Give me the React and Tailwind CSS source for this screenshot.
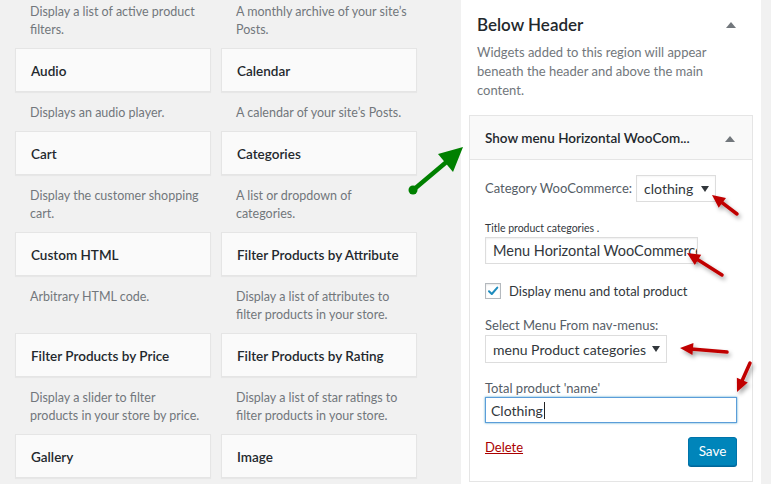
import React from "react";

const widgets = [
  ["Active Product Filters", ["Display a list of active product", "filters."]],
  ["Archives", ["A monthly archive of your site’s", "Posts."]],
  ["Audio", ["Displays an audio player."]],
  ["Calendar", ["A calendar of your site’s Posts."]],
  ["Cart", ["Display the customer shopping", "cart."]],
  ["Categories", ["A list or dropdown of", "categories."]],
  ["Custom HTML", ["Arbitrary HTML code."]],
  ["Filter Products by Attribute", ["Display a list of attributes to", "filter products in your store."]],
  ["Filter Products by Price", ["Display a slider to filter", "products in your store by price."]],
  ["Filter Products by Rating", ["Display a list of star ratings to", "filter products in your store."]],
  ["Gallery", []],
  ["Image", []],
];

function Up() {
  return (
    <svg width="10" height="6" viewBox="0 0 10 6">
      <polygon points="5,0 10,6 0,6" fill="#72777c" />
    </svg>
  );
}

function Down() {
  return (
    <svg width="8" height="6" viewBox="0 0 8 6">
      <polygon points="0,0 8,0 4,6" fill="#32373c" />
    </svg>
  );
}

function RedArrow({ x1, y1, x2, y2 }) {
  const dx = x2 - x1;
  const dy = y2 - y1;
  const len = Math.sqrt(dx * dx + dy * dy);
  const ux = dx / len;
  const uy = dy / len;
  const hl = 13;
  const hw = 6;
  const bx = x2 - ux * hl;
  const by = y2 - uy * hl;
  const px = -uy;
  const py = ux;
  const pts = `${x2},${y2} ${bx + px * hw},${by + py * hw} ${bx - px * hw},${by - py * hw}`;
  return (
    <g filter="url(#sh)">
      <line x1={x1} y1={y1} x2={bx + ux * 2} y2={by + uy * 2} stroke="#c00000" strokeWidth="3.5" strokeLinecap="round" />
      <polygon points={pts} fill="#c00000" />
    </g>
  );
}

export default function App() {
  return (
    <div
      className="relative w-[771px] h-[484px] overflow-hidden bg-[#f1f1f1] flex"
      style={{ fontFamily: 'Lato, "Open Sans", sans-serif' }}
    >
      <div className="pl-[15px] w-[417px] shrink-0 mt-[-53px]">
        <div className="grid grid-cols-[196px_196px] gap-x-[10px]">
          {widgets.map(([t, d]) => (
            <div key={t} className="flex flex-col">
              <div className="h-[44px] bg-[#fafafa] border border-[#e5e5e5] shadow-[0_1px_1px_rgba(0,0,0,0.04)] flex items-center pt-[2px] px-[15px] text-[13.5px] font-semibold text-[#23282d] whitespace-nowrap">
                {t}
              </div>
              <div className="pt-[12px] pb-[9px] pl-[15px] pr-[4px] text-[12.5px] leading-[18px] text-[#72777c] whitespace-nowrap">
                {d.map((l) => (
                  <div key={l}>{l}</div>
                ))}
              </div>
            </div>
          ))}
        </div>
      </div>

      <div className="ml-[44px] w-[300px] bg-white px-[8px] shrink-0">
        <div className="flex items-center justify-between pl-[8px] pr-[17px] pt-[13px] h-[37px]">
          <span className="text-[17px] font-semibold text-[#23282d] leading-[24px]">Below Header</span>
          <Up />
        </div>
        <div className="pl-[8px] mt-[6px] text-[13px] leading-[19px] text-[#72777c] whitespace-nowrap">
          <div>Widgets added to this region will appear</div>
          <div>beneath the header and above the main</div>
          <div>content.</div>
        </div>
        <div className="mt-[15px] border border-[#e5e5e5] bg-white h-[367px]">
          <div className="h-[44px] bg-[#f9f9f9] border-b border-[#e5e5e5] flex items-center justify-between pt-[2px] pl-[15px] pr-[17px]">
            <span className="text-[13.5px] font-semibold text-[#23282d] whitespace-nowrap">Show menu Horizontal WooCom...</span>
            <Up />
          </div>
          <div className="pl-[15px] pr-[15px] text-[#444] whitespace-nowrap">
            <div className="flex items-center mt-[15px] gap-[4px]">
              <span className="text-[13px] text-[#555d66]">Category WooCommerce:</span>
              <div className="w-[80px] h-[27px] border border-[#ddd] flex items-center justify-between pl-[7px] pr-[6px] text-[14px] text-[#32373c] shadow-[inset_0_1px_2px_rgba(0,0,0,0.04)]">
                <span>clothing</span>
                <Down />
              </div>
            </div>
            <div className="mt-[19px] h-[14px] text-[10.5px] leading-[14px] text-[#32373c]">Title product categories .</div>
            <div className="mt-[2px] w-[213px] h-[27px] border border-[#ddd] flex items-center pl-[7px] overflow-hidden text-[14.5px] text-[#32373c] shadow-[inset_0_1px_2px_rgba(0,0,0,0.07)]">
              Menu Horizontal WooCommerce
            </div>
            <div className="mt-[19px] h-[16px] flex items-center gap-[8px]">
              <div className="w-[16px] h-[16px] border border-[#b4b9be] flex items-center justify-center shadow-[inset_0_1px_2px_rgba(0,0,0,0.1)]">
                <svg width="12" height="12" viewBox="0 0 12 12">
                  <path d="M2 6.2 L4.8 9 L10.3 2.6" stroke="#1e8cbe" strokeWidth="2" fill="none" strokeLinecap="round" strokeLinejoin="round" />
                </svg>
              </div>
              <span className="text-[13px] leading-[16px] text-[#32373c]">Display menu and total product</span>
            </div>
            <div className="mt-[17px] h-[18px] text-[13px] leading-[18px] text-[#555d66]">Select Menu From nav-menus:</div>
            <div className="mt-[1px] w-[182px] h-[28px] border border-[#ddd] flex items-center justify-between pl-[7px] pr-[6px] text-[14px] text-[#32373c]">
              <span>menu Product categories</span>
              <Down />
            </div>
            <div className="mt-[16px] h-[18px] text-[13px] leading-[18px] text-[#555d66]">Total product 'name'</div>
            <div className="w-[252px] h-[26px] border border-[#5b9dd9] shadow-[0_0_2px_rgba(30,140,190,0.8)] flex items-center pl-[5px] text-[14px] text-[#32373c]">
              Clothing<span className="inline-block w-[1px] h-[17px] bg-[#222] ml-[1px]" />
            </div>
            <div className="mt-[14px] flex items-start justify-between w-[252px]">
              <span className="text-[13px] text-[#a00] underline mt-[1px]">Delete</span>
              <div className="w-[49px] h-[29px] rounded-[3px] bg-[#0085ba] border border-[#0073aa] shadow-[0_1px_0_#006799] flex items-center justify-center text-white text-[13.5px]">
                Save
              </div>
            </div>
          </div>
        </div>
      </div>

      <svg className="absolute left-0 top-0 pointer-events-none" width="771" height="484" viewBox="0 0 771 484">
        <defs>
          <filter id="sh" x="-50%" y="-50%" width="200%" height="200%">
            <feDropShadow dx="2" dy="3" stdDeviation="2" floodColor="#000" floodOpacity="0.35" />
          </filter>
        </defs>
        <line x1="412" y1="191" x2="450" y2="159" stroke="#008000" strokeWidth="4.5" />
        <circle cx="413" cy="190" r="4.5" fill="#008000" />
        <polygon points="463,147 438,154 453,172" fill="#008000" />
        <RedArrow x1={737} y1={214} x2={712} y2={195} />
        <RedArrow x1={722} y1={275} x2={687} y2={253} />
        <RedArrow x1={727} y1={352} x2={680} y2={348} />
        <RedArrow x1={750} y1={363} x2={737} y2={392} />
      </svg>
    </div>
  );
}
